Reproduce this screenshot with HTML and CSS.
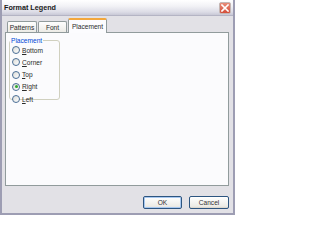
FILE: index.html
```html
<!DOCTYPE html>
<html>
<head>
<meta charset="utf-8">
<link rel="stylesheet" href="styles.css">
</head>
<body>
<div class="window">
  <div class="titlebar">
    <span class="title">Format Legend</span>
    <span class="close"><svg width="8" height="8" viewBox="0 0 8 8"><path d="M1 1L7 7M7 1L1 7" stroke="#fff" stroke-width="1.6" stroke-linecap="square"/></svg></span>
  </div>
  <div class="content">
    <div class="tabs">
      <div class="tab">Patterns</div>
      <div class="tab">Font</div>
      <div class="tab active">Placement</div>
    </div>
    <div class="panel">
      <fieldset class="group">
        <legend>Placement</legend>
        <div class="radio"><span class="dot"></span><span><u>B</u>ottom</span></div>
        <div class="radio"><span class="dot"></span><span><u>C</u>orner</span></div>
        <div class="radio"><span class="dot"></span><span><u>T</u>op</span></div>
        <div class="radio"><span class="dot checked"></span><span><u>R</u>ight</span></div>
        <div class="radio"><span class="dot"></span><span><u>L</u>eft</span></div>
      </fieldset>
    </div>
    <div class="buttons">
      <div class="btn default">OK</div>
      <div class="btn">Cancel</div>
    </div>
  </div>
</div>
</body>
</html>
```
FILE: styles.css
```css
html, body { margin: 0; padding: 0; }
body { width: 235px; height: 215px; overflow: hidden; font-family: "Liberation Sans", Arial, sans-serif; font-size: 6.6px; color: #2a2a2a; }
.window { width: 235px; height: 215px; box-sizing: border-box; background: #e2e1e6; border: 1px solid #9d9db3; border-top: none; border-left-width: 2px; border-right-width: 2px; border-bottom-width: 2px; display: flex; flex-direction: column; }
.titlebar { height: 16px; flex: none; display: flex; align-items: center; justify-content: space-between; padding: 0 2px 0 2px; background: linear-gradient(#ffffff 0%, #f2f2f6 40%, #dcdce6 80%, #c8c8d6 100%); border-bottom: 1px solid #b4b4c4; box-sizing: border-box; }
.title { font-weight: bold; font-size: 7.2px; color: #1a1a1a; }
.close { width: 12px; height: 12px; box-sizing: border-box; border: 1px solid #c4b6b4; border-radius: 2px; background: linear-gradient(#e88c78, #d44e3a); display: flex; align-items: center; justify-content: center; }
.close svg { display: block; }
.content { flex: 1; display: flex; flex-direction: column; padding: 2px 4px 0 3px; }
.tabs { display: flex; align-items: flex-end; height: 14px; padding-left: 2px; gap: 1px; }
.tab { height: 11px; box-sizing: border-box; border: 1px solid #919b9c; border-bottom: none; border-radius: 2px 2px 0 0; background: linear-gradient(#fefefe, #ecebe6); display: flex; align-items: center; justify-content: center; padding: 0 4px; }
.tab:nth-child(1) { width: 30px; }
.tab:nth-child(2) { width: 29px; }
.tab.active { width: 39px; height: 15px; margin-bottom: -1px; background: #fcfcfe; border-top: 2px solid #f3a73c; position: relative; z-index: 1; }
.panel { height: 154px; box-sizing: border-box; border: 1px solid #919b9c; background: #fbfbfd; padding: 4px 3px; flex: none; }
.group { width: 51px; height: 63px; box-sizing: border-box; margin: 0; border: 1px solid #d0d0bf; border-radius: 3px; padding: 2px 0 0 2px; display: flex; flex-direction: column; gap: 4.3px; }
.group legend { color: #0046d5; padding: 0 1px; margin-left: -2px; line-height: 7px; }
.radio { display: flex; align-items: center; gap: 2px; height: 8px; }
.radio u { text-decoration: underline; }
.dot { width: 8px; height: 8px; box-sizing: border-box; border: 1px solid #4a6e96; border-radius: 50%; background: linear-gradient(135deg, #dcdcd7, #ffffff); display: flex; align-items: center; justify-content: center; }
.dot.checked::after { content: ""; width: 3px; height: 3px; border-radius: 50%; background: #2fa82f; }
.buttons { display: flex; justify-content: flex-end; gap: 7px; margin-top: 10px; }
.btn { width: 40px; height: 13px; box-sizing: border-box; border: 1px solid #2d5580; border-radius: 2px; background: linear-gradient(#ffffff, #ecebe6 85%, #d6d0c5); display: flex; align-items: center; justify-content: center; color: #333; }
.btn.default { width: 39px; box-shadow: inset 0 0 0 1px #a8c8f0; }
```
